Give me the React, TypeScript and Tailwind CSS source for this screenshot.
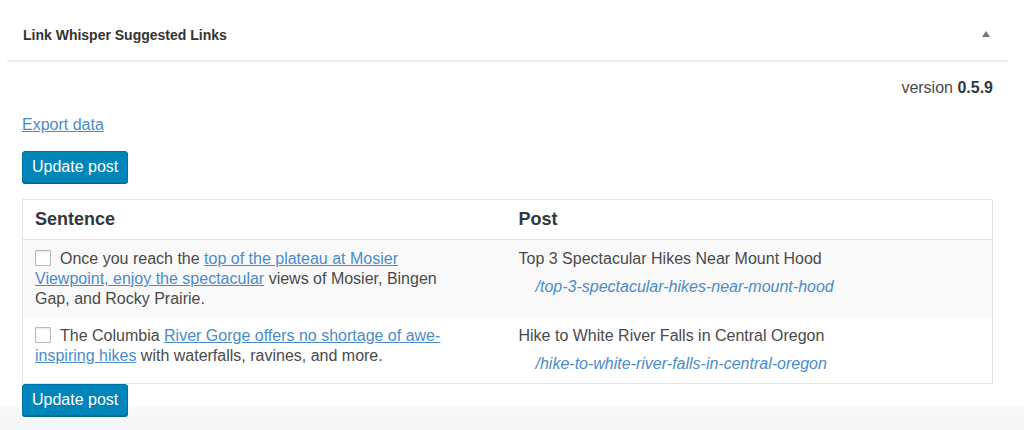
const rows = [
  {
    before: "Once you reach the ",
    link: "top of the plateau at Mosier Viewpoint, enjoy the spectacular",
    after: " views of Mosier, Bingen Gap, and Rocky Prairie.",
    title: "Top 3 Spectacular Hikes Near Mount Hood",
    slug: "/top-3-spectacular-hikes-near-mount-hood",
  },
  {
    before: "The Columbia ",
    link: "River Gorge offers no shortage of awe-inspiring hikes",
    after: " with waterfalls, ravines, and more.",
    title: "Hike to White River Falls in Central Oregon",
    slug: "/hike-to-white-river-falls-in-central-oregon",
  },
];

const UpdateButton = () => (
  <button className="h-[32px] px-[9px] rounded-[3px] bg-[#0085ba] border border-[#0073aa] shadow-[0_1px_0_#006799] text-white text-[16px] leading-none">
    Update post
  </button>
);

export default function App() {
  return (
    <div className="w-[1024px] h-[430px] overflow-hidden bg-white font-['Liberation_Sans',Arial,sans-serif] text-[#4a4a4a]">
      <div className="ml-[7px] w-[1001px]">
        <div className="h-[62px] pt-[10px] pl-4 pr-[18px] flex items-center justify-between border-b-2 border-[#eeeeee]">
          <h2 className="text-[14px] font-bold text-[#333]">Link Whisper Suggested Links</h2>
          <svg width="8" height="6" viewBox="0 0 8 6" className="mb-[3px]">
            <path d="M4 0 L8 6 L0 6 Z" fill="#72777c" />
          </svg>
        </div>

        <div className="px-[15px]">
          <p className="mt-[14px] text-right text-[16px] leading-6">
            version <span className="font-bold text-[#32373c]">0.5.9</span>
          </p>
          <a href="#" className="block mt-[13px] w-max text-[16px] leading-6 text-[#4a8cca] underline">
            Export data
          </a>
          <div className="mt-[14px]">
            <UpdateButton />
          </div>

          <table className="mt-[16px] w-full table-fixed border-collapse border border-[#e5e5e5] text-[16px]">
            <thead>
              <tr className="border-b border-[#e1e1e1]">
                <th className="w-[484px] h-[40px] px-3 text-left text-[18px] font-bold text-[#32373c]">Sentence</th>
                <th className="px-3 text-left text-[18px] font-bold text-[#32373c]">Post</th>
              </tr>
            </thead>
            <tbody>
              {rows.map((r, i) => (
                <tr key={i} className={i % 2 === 0 ? "bg-[#f9f9f9]" : "bg-white"}>
                  <td className="pl-3 pr-[42px] pt-[9px] pb-[8px] align-top leading-5">
                    <span className="inline-block w-4 h-4 mr-[9px] align-[-2px] bg-white border border-[#b4b9be] rounded-[1px] shadow-[inset_0_1px_2px_rgba(0,0,0,0.1)]" />
                    {r.before}
                    <a href="#" className="text-[#4a8cca] underline">{r.link}</a>
                    {r.after}
                  </td>
                  <td className="px-3 pt-[9px] pb-[9px] align-top leading-5">
                    <div>{r.title}</div>
                    <div className="mt-2 pl-[17px] italic text-[#4a8cca]">{r.slug}</div>
                  </td>
                </tr>
              ))}
            </tbody>
          </table>
        </div>
      </div>

      <div className="h-[60px] px-[22px] bg-[linear-gradient(to_bottom,#ffffff_0,#ffffff_22px,#f8f8f9_24px,#f2f3f4_60px)]">
        <UpdateButton />
      </div>
    </div>
  );
}
